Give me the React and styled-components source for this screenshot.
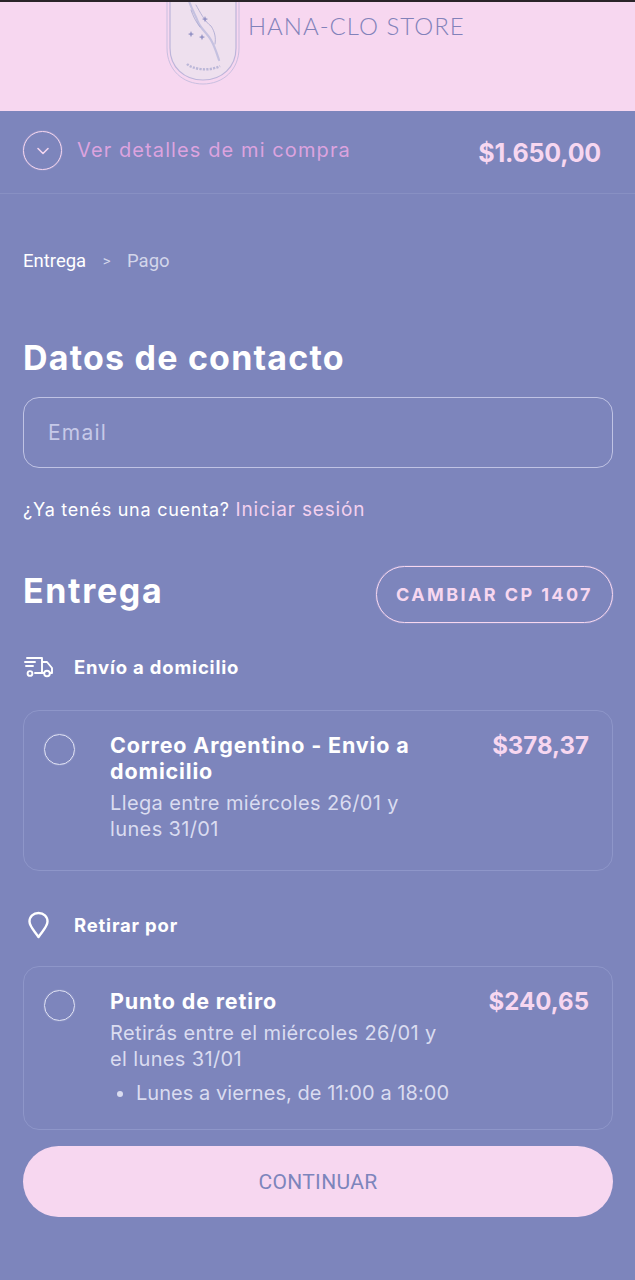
import React from "react";
import styled, { createGlobalStyle } from "styled-components";

const Global = createGlobalStyle`
  html, body { margin: 0; padding: 0; background: #7d85bc; }
  * { box-sizing: border-box; }
  body { font-family: Inter, "Liberation Sans", sans-serif; }
`;
const Page = styled.div`
  width: 635px; height: 1280px; overflow: hidden; background: #7d85bc; color: #fff;
`;
const TopEdge = styled.div`height: 2px; background: #2a2429;`;
const Header = styled.header`
  height: 109px; background: #f7d7f0; display: flex; align-items: flex-start; padding-left: 165px; overflow: hidden;
`;
const Logo = styled.svg`width: 76px; height: 84px; flex: none; display: block;`;
const Brand = styled.div`
  margin: 11px 0 0 7px; font-family: Lato, sans-serif; font-size: 24px; line-height: 26px; font-weight: 300;
  color: #8282ba; white-space: nowrap; letter-spacing: 1px;
`;
const Summary = styled.div`
  height: 83px; display: flex; align-items: flex-start; padding: 20px 34px 0 23px; border-bottom: 1px solid #8890c3;
`;
const Chevron = styled.div`
  width: 39px; height: 39px; border-radius: 50%; border: 1px solid #f7d7f0; box-shadow: 0 0 1px #f3d5ef; display: flex; align-items: center; justify-content: center; flex: none;
`;
const SummaryLabel = styled.div`
  margin: 6px 0 0 15px; font-size: 20px; line-height: 26px; color: #dca3df; flex: 1; letter-spacing: 1.1px;
`;
const Total = styled.div`
  margin-top: 7px; font-size: 25px; line-height: 30px; font-weight: 700; color: #f7d7f0; letter-spacing: -.2px;
`;
const Main = styled.main`padding: 0 22px 0 23px;`;
const Crumbs = styled.nav`
  margin-top: 55px; display: flex; align-items: center; font-family: Roboto, sans-serif; line-height: 24px; gap: 16.5px;
`;
const Crumb = styled.span`
  color: ${p => p.$active ? "#fff" : "#d3d6ea"};
  font-size: ${p => p.$small ? "15px" : "18.5px"};
`;
const H1 = styled.h1`
  margin: 65px 0 0; font-size: 34px; line-height: 40px; font-weight: 700; color: #fff; letter-spacing: 1.2px;
`;
const EmailBox = styled.div`
  margin-top: 19px; height: 71px; border: 1px solid #c0c3e4; border-radius: 16px; padding: 0 24px; display: flex; align-items: center;
  font-size: 21px; color: #c6c9e8; letter-spacing: 1.2px;
`;
const Account = styled.p`
  margin: 29px 0 0; font-size: 18px; line-height: 26px; color: #fff; letter-spacing: .75px;
`;
const Link = styled.span`color: #f3d0ee; font-size: 19px; letter-spacing: .85px;`;
const DeliveryHead = styled.div`
  margin-top: 43px; display: flex; justify-content: space-between; align-items: center;
`;
const H2 = styled.h2`
  margin: 0 0 8px; font-size: 34px; line-height: 40px; font-weight: 700; letter-spacing: 1.65px;
`;
const Outline = styled.button`
  width: 237px; height: 57px; border-radius: 29px; border: 1px solid #f7d7f0; box-shadow: 0 0 1px #f3d5ef; background: transparent; color: #f7d7f0;
  font-family: Inter, sans-serif; font-size: 18px; font-weight: 700; letter-spacing: 2.4px; padding: 0;
`;
const MethodTitle = styled.div`
  display: flex; align-items: center; margin-top: ${p => p.$top}px; height: 30px;
`;
const IconSlot = styled.div`width: 51px; flex: none; display: flex; align-items: center; padding-left: ${p => p.$pad || 0}px;`;
const MethodLabel = styled.div`font-size: 18.5px; font-weight: 700; color: #fff; letter-spacing: .8px;`;
const Card = styled.div`
  margin-top: ${p => p.$top}px; height: ${p => p.$h}px; border: 1px solid #8e96c9; border-radius: 16px;
  padding: 21px 23px 0 20px; display: flex; align-items: flex-start;
`;
const Radio = styled.div`
  width: 31px; height: 31px; border-radius: 50%; border: 1px solid #dfe1f3; box-shadow: 0 0 1px #c9cce8; flex: none; margin-top: 2px;
`;
const Body = styled.div`margin-left: 35px; flex: 1; min-width: 0;`;
const OptionTitle = styled.div`font-size: 21.5px; line-height: 26px; font-weight: 700; color: #fff; max-width: 330px; letter-spacing: .85px;`;
const OptionText = styled.div`
  margin-top: 6px; font-size: 20px; line-height: 26px; color: #dadcf0; max-width: 340px; letter-spacing: .37px;
`;
const Bullet = styled.li`
  margin: 8px 0 0 26px; font-size: 20px; line-height: 26px; color: #dadcf0; letter-spacing: .05px; white-space: nowrap;
`;
const BulletList = styled.ul`margin: 0; padding: 0; list-style: disc;`;
const Price = styled.div`font-size: 24px; line-height: 28px; font-weight: 700; color: #f7d7f0; flex: none; letter-spacing: 0;`;
const Continue = styled.button`
  margin-top: 16px; width: 100%; height: 71px; border: 0; border-radius: 36px; background: #f7d7f0; color: #7d85bc;
  font-family: Roboto, sans-serif; font-size: 21px; font-weight: 400; padding: 0; letter-spacing: .35px;
`;

const App = () => (
  <Page>
    <Global />
    <TopEdge />
    <Header>
      <Logo viewBox="0 0 76 84" fill="none">
        <path d="M5 -4V46C5 65 19 78 38 78C57 78 71 65 71 46V-4" fill="#eee0ee" stroke="#bdb5da" strokeWidth="1.2" />
        <path d="M2 -4V46C2 68 18 82 38 82C58 82 74 68 74 46V-4" stroke="#c9bfe0" strokeWidth="1" />
        <path d="M24 -1C27 8 31 14 33 20C36 27 42 31 46 38C50 45 52 52 54 58" stroke="#b4b4da" strokeWidth="2.2" strokeLinecap="round" opacity=".7" />
        <path d="M31 3C35 10 40 20 46 24C50 30 51 36 50 42M26 8C28 14 31 20 35 25" stroke="#a7a6d0" strokeWidth="1" strokeLinecap="round" opacity=".8" />
        <path d="M40 14l.9 2.2 2.2.9-2.2.9-.9 2.2-.9-2.2-2.2-.9 2.2-.9zM26 29l.9 2.2 2.2.9-2.2.9-.9 2.2-.9-2.2-2.2-.9 2.2-.9zM37 32l.9 2.2 2.2.9-2.2.9-.9 2.2-.9-2.2-2.2-.9 2.2-.9z" fill="#9493c5" />
        <path d="M22 62C27 67 44 70 55 64" stroke="#b2afd4" strokeWidth="2.4" strokeDasharray="2.2 1.2" opacity=".85" />
      </Logo>
      <Brand>HANA-CLO STORE</Brand>
    </Header>
    <Summary>
      <Chevron>
        <svg width="14" height="10" viewBox="0 0 14 10" fill="none"><path d="M2 2.5L7 7.5L12 2.5" stroke="#f3d5ef" strokeWidth="1.6" strokeLinecap="round" strokeLinejoin="round" /></svg>
      </Chevron>
      <SummaryLabel>Ver detalles de mi compra</SummaryLabel>
      <Total>$1.650,00</Total>
    </Summary>
    <Main>
      <Crumbs>
        <Crumb $active>Entrega</Crumb>
        <Crumb $small>&gt;</Crumb>
        <Crumb>Pago</Crumb>
      </Crumbs>
      <H1>Datos de contacto</H1>
      <EmailBox>Email</EmailBox>
      <Account>¿Ya tenés una cuenta? <Link>Iniciar sesión</Link></Account>
      <DeliveryHead>
        <H2>Entrega</H2>
        <Outline>CAMBIAR CP 1407</Outline>
      </DeliveryHead>
      <MethodTitle $top={29}>
        <IconSlot $pad={1}>
          <svg width="30" height="22" viewBox="0 0 30 22" fill="none" stroke="#fff" strokeWidth="1.9" strokeLinecap="round" strokeLinejoin="round">
            <path d="M3 2H18V17H11M18 6H23L28 12V17H26M18 17H20" />
            <path d="M1 6H11M2 10H9" />
            <circle cx="6" cy="17.5" r="2.4" />
            <circle cx="23" cy="17.5" r="2.8" />
          </svg>
        </IconSlot>
        <MethodLabel>Envío a domicilio</MethodLabel>
      </MethodTitle>
      <Card $top={28} $h={161}>
        <Radio />
        <Body>
          <OptionTitle>Correo Argentino - Envio a domicilio</OptionTitle>
          <OptionText>Llega entre miércoles 26/01 y lunes 31/01</OptionText>
        </Body>
        <Price>$378,37</Price>
      </Card>
      <MethodTitle $top={39}>
        <IconSlot $pad={4}>
          <svg width="23" height="28" viewBox="0 0 23 28" fill="none" stroke="#fff" strokeWidth="2.4" strokeLinejoin="round">
            <path d="M11.5 26C7.5 20 2.5 15.5 2.5 10.5C2.5 5.3 6.4 2 11.5 2S20.5 5.3 20.5 10.5C20.5 15.5 15.5 20 11.5 26Z" />
          </svg>
        </IconSlot>
        <MethodLabel>Retirar por</MethodLabel>
      </MethodTitle>
      <Card $top={26} $h={164}>
        <Radio />
        <Body>
          <OptionTitle>Punto de retiro</OptionTitle>
          <OptionText>Retirás entre el miércoles 26/01 y el lunes 31/01</OptionText>
          <BulletList><Bullet>Lunes a viernes, de 11:00 a 18:00</Bullet></BulletList>
        </Body>
        <Price>$240,65</Price>
      </Card>
      <Continue>CONTINUAR</Continue>
    </Main>
  </Page>
);
export default App;
